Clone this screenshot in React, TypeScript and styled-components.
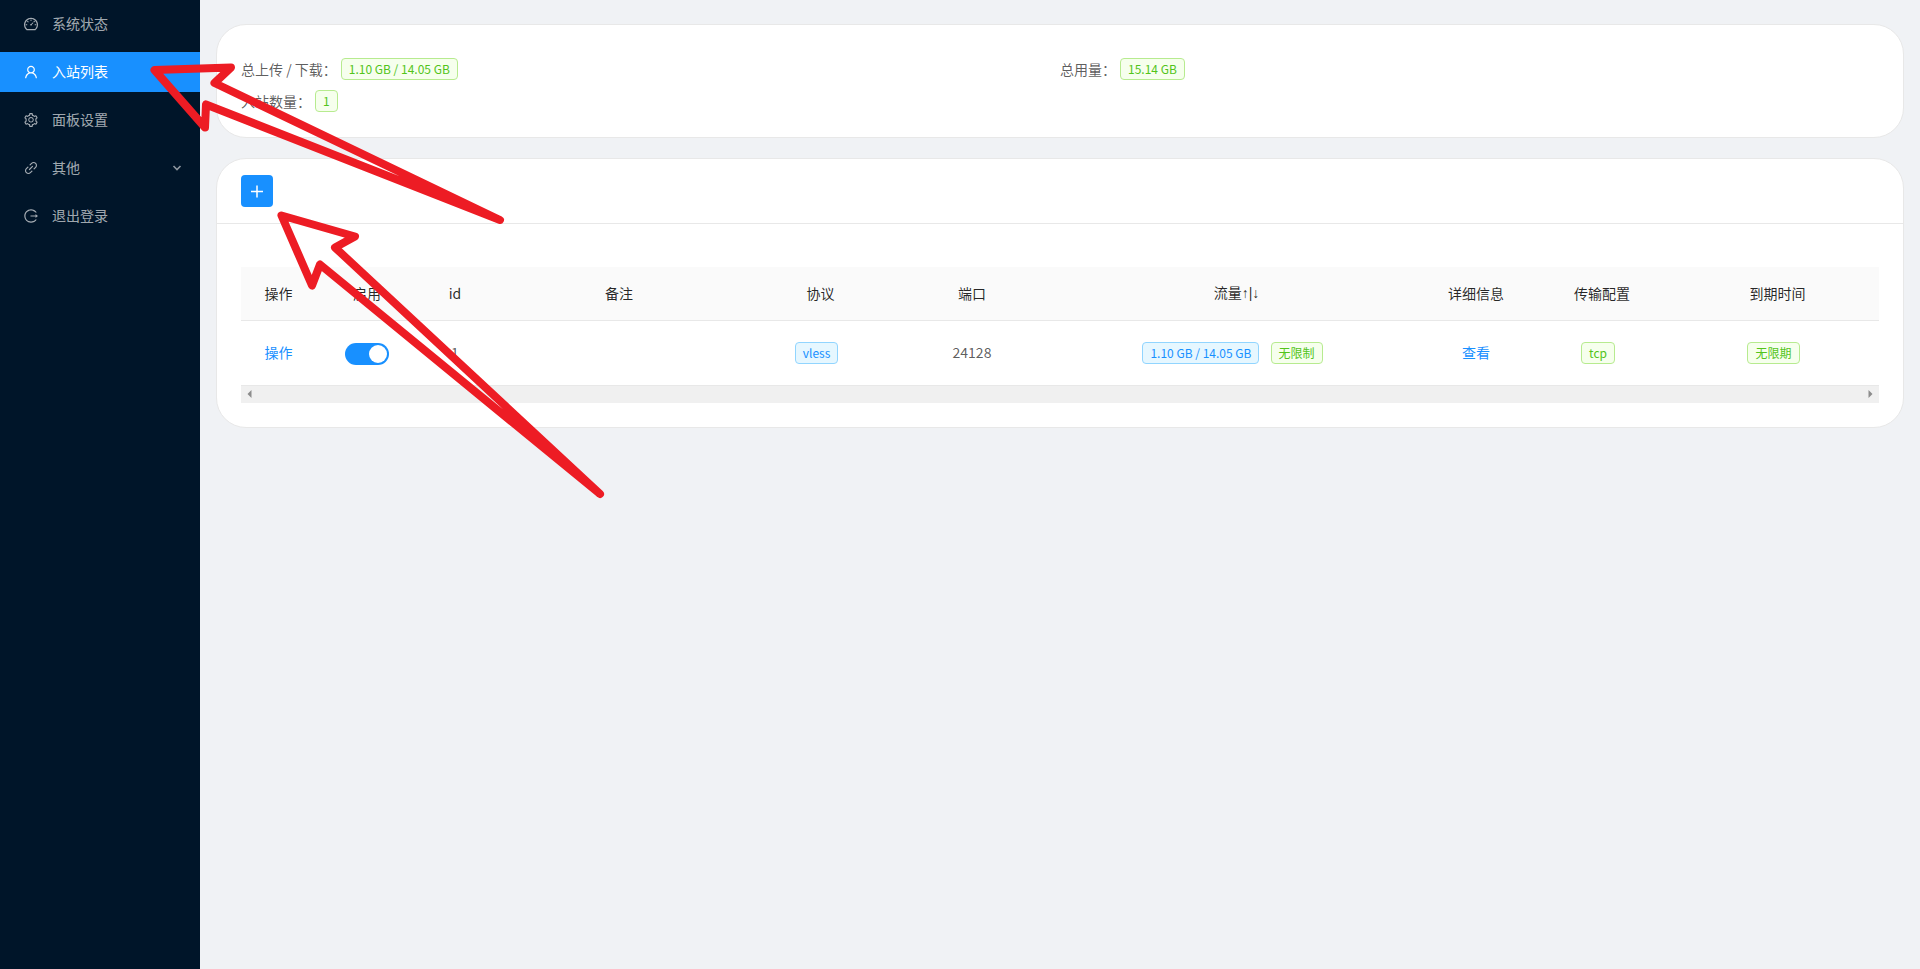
import React from 'react';
import styled, { createGlobalStyle, css } from 'styled-components';
import {
  AiOutlineDashboard,
  AiOutlineLink,
  AiOutlineLogout,
  AiOutlineSetting,
  AiOutlineUser,
} from 'react-icons/ai';

const GlobalStyle = createGlobalStyle`
  * {
    box-sizing: border-box;
  }

  body {
    margin: 0;
    background: #f0f2f5;
    color: rgba(0, 0, 0, 0.65);
    font-family: 'Noto Sans CJK SC', 'Open Sans', sans-serif;
    font-size: 14px;
    line-height: 22px;
  }
`;

const Layout = styled.div`
  position: relative;
  display: flex;
  min-height: 100vh;
`;

const Sidebar = styled.nav`
  flex: 0 0 200px;
  background: #001529;
`;

const MenuList = styled.ul`
  display: flex;
  flex-direction: column;
  gap: 8px;
  margin: 0;
  padding: 4px 0;
  list-style: none;
`;

const MenuLink = styled.a<{ $active?: boolean }>`
  display: flex;
  align-items: center;
  gap: 13px;
  height: 40px;
  padding: 0 16px 0 23px;
  color: ${(p) => (p.$active ? '#fff' : 'rgba(255, 255, 255, 0.65)')};
  background: ${(p) => (p.$active ? '#1890ff' : 'transparent')};
  text-decoration: none;

  > svg {
    flex: none;
  }
`;

const MenuText = styled.span`
  flex: 1;
  padding-bottom: 2px;
`;

const Content = styled.main`
  flex: 1;
  min-width: 0;
  display: flex;
  flex-direction: column;
  gap: 20px;
  padding: 24px 16px;
`;

const Card = styled.section`
  overflow: hidden;
  border: 1px solid #e8e8e8;
  border-radius: 30px;
  background: #fff;
`;

const Summary = styled.div`
  display: grid;
  grid-template-columns: 1fr 1fr;
  grid-auto-rows: 32px;
  padding: 28px 24px 20px;
`;

const SummaryItem = styled.div`
  display: flex;
  align-items: center;
  gap: 4px;
`;

const CardHead = styled.header`
  display: flex;
  padding: 16px 24px;
  border-bottom: 1px solid #e8e8e8;
`;

const CardBody = styled.div`
  padding: 43px 24px 24px;
`;

const AddButton = styled.button`
  display: flex;
  align-items: center;
  justify-content: center;
  width: 32px;
  height: 32px;
  padding: 0;
  border: 0;
  border-radius: 4px;
  background: #1890ff;
  color: #fff;
`;

const tagColors = {
  green: css`
    color: #52c41a;
    background: #f6ffed;
    border-color: #b7eb8f;
  `,
  blue: css`
    color: #1890ff;
    background: #e6f7ff;
    border-color: #91d5ff;
  `,
};

const Tag = styled.span<{ $color: 'green' | 'blue' }>`
  display: inline-block;
  margin-right: 8px;
  padding: 0 7px;
  border: 1px solid;
  border-radius: 4px;
  font-size: 12px;
  line-height: 20px;
  white-space: nowrap;
  ${(p) => tagColors[p.$color]}
`;

const Table = styled.table`
  width: 100%;
  table-layout: fixed;
  border-collapse: separate;
  border-spacing: 0;
  text-align: center;
`;

const HeadCell = styled.th`
  height: 54px;
  padding: 0 0 2px;
  border-bottom: 1px solid #e8e8e8;
  background: #fafafa;
  color: rgba(0, 0, 0, 0.85);
  font-weight: 400;
`;

const Cell = styled.td<{ $control?: boolean }>`
  height: 65px;
  padding: ${(p) => (p.$control ? '0' : '0 0 2px')};
  border-bottom: 1px solid #e8e8e8;
`;

const Arrows = styled.span`
  font-family: 'Liberation Sans', sans-serif;
`;

const TextLink = styled.a`
  color: #1890ff;
  text-decoration: none;
`;

const Switch = styled.input`
  display: inline-flex;
  justify-content: flex-end;
  align-items: center;
  appearance: none;
  width: 44px;
  height: 22px;
  margin: 0;
  padding: 2px;
  border-radius: 11px;
  background: #1890ff;
  vertical-align: middle;

  &::before {
    content: '';
    width: 18px;
    height: 18px;
    border-radius: 50%;
    background: #fff;
  }

  &:not(:checked) {
    justify-content: flex-start;
    background: rgba(0, 0, 0, 0.25);
  }
`;

const ScrollTrack = styled.div`
  display: flex;
  justify-content: space-between;
  height: 17px;
  background: #f0f0f0;
`;

const ScrollButton = styled.button`
  display: flex;
  align-items: center;
  justify-content: center;
  width: 17px;
  height: 16px;
  padding: 0;
  border: 0;
  background: transparent;
  color: #8c8c8c;
`;

const Annotations = styled.svg`
  position: absolute;
  top: 0;
  left: 0;
  pointer-events: none;
`;

const menu = [
  { label: '系统状态', Icon: AiOutlineDashboard },
  { label: '入站列表', Icon: AiOutlineUser, active: true },
  { label: '面板设置', Icon: AiOutlineSetting },
  { label: '其他', Icon: AiOutlineLink, expandable: true },
  { label: '退出登录', Icon: AiOutlineLogout },
];

const columns: { title: React.ReactNode; width: number }[] = [
  { title: '操作', width: 75 },
  { title: '启用', width: 102 },
  { title: 'id', width: 74 },
  { title: '备注', width: 254 },
  { title: '协议', width: 149 },
  { title: '端口', width: 154 },
  { title: <>流量<Arrows>↑|↓</Arrows></>, width: 375 },
  { title: '详细信息', width: 104 },
  { title: '传输配置', width: 148 },
  { title: '到期时间', width: 203 },
];

export default function App() {
  return (
    <>
      <GlobalStyle />
      <Layout>
        <Sidebar>
          <MenuList>
            {menu.map(({ label, Icon, active, expandable }) => (
              <li key={label}>
                <MenuLink href="#" $active={active}>
                  <Icon size={16} />
                  <MenuText>{label}</MenuText>
                  {expandable && (
                    <svg width="14" height="14" viewBox="0 0 14 14" fill="none" stroke="currentColor" strokeWidth="1.6" opacity="0.85">
                      <path d="M3.5 5 7 8.5 10.5 5" />
                    </svg>
                  )}
                </MenuLink>
              </li>
            ))}
          </MenuList>
        </Sidebar>
        <Content>
          <Card>
            <Summary>
              <SummaryItem>总上传 / 下载：<Tag $color="green">1.10 GB / 14.05 GB</Tag></SummaryItem>
              <SummaryItem>总用量：<Tag $color="green">15.14 GB</Tag></SummaryItem>
              <SummaryItem>入站数量：<Tag $color="green">1</Tag></SummaryItem>
            </Summary>
          </Card>
          <Card>
            <CardHead>
              <AddButton type="button" aria-label="添加">
                <svg width="16" height="16" viewBox="0 0 16 16" fill="none" stroke="currentColor" strokeWidth="1.5">
                  <path d="M2 8.5h12M8 2.5v12" />
                </svg>
              </AddButton>
            </CardHead>
            <CardBody>
              <Table>
                <colgroup>
                  {columns.map((c, i) => (
                    <col key={i} width={c.width} />
                  ))}
                </colgroup>
                <thead>
                  <tr>
                    {columns.map((c, i) => (
                      <HeadCell key={i} scope="col">{c.title}</HeadCell>
                    ))}
                  </tr>
                </thead>
                <tbody>
                  <tr>
                    <Cell><TextLink href="#">操作</TextLink></Cell>
                    <Cell $control><Switch type="checkbox" role="switch" aria-label="启用" defaultChecked /></Cell>
                    <Cell>1</Cell>
                    <Cell />
                    <Cell><Tag $color="blue">vless</Tag></Cell>
                    <Cell>24128</Cell>
                    <Cell>
                      <Tag $color="blue">1.10 GB / 14.05 GB</Tag> <Tag $color="green">无限制</Tag>
                    </Cell>
                    <Cell><TextLink href="#">查看</TextLink></Cell>
                    <Cell><Tag $color="green">tcp</Tag></Cell>
                    <Cell><Tag $color="green">无限期</Tag></Cell>
                  </tr>
                </tbody>
              </Table>
              <ScrollTrack>
                <ScrollButton type="button" aria-label="向左滚动">
                  <svg width="5" height="8" viewBox="0 0 5 8" fill="currentColor"><path d="M4.5 0v8L0.5 4z" /></svg>
                </ScrollButton>
                <ScrollButton type="button" aria-label="向右滚动">
                  <svg width="5" height="8" viewBox="0 0 5 8" fill="currentColor"><path d="M0.5 0v8L4.5 4z" /></svg>
                </ScrollButton>
              </ScrollTrack>
            </CardBody>
          </Card>
        </Content>
        <Annotations
          width="640"
          height="520"
          viewBox="0 0 640 520"
          fill="none"
          stroke="#ed1c24"
          strokeWidth="8"
          strokeLinejoin="round"
          aria-hidden="true"
        >
          <path d="M154.5 70 231 67.5 214.5 83 500 220 206 104.5 205 127.5Z" />
          <path d="M281.5 215.5 355 236.5 335 247.5 600 494 320 264.5 312 285.5Z" />
        </Annotations>
      </Layout>
    </>
  );
}
